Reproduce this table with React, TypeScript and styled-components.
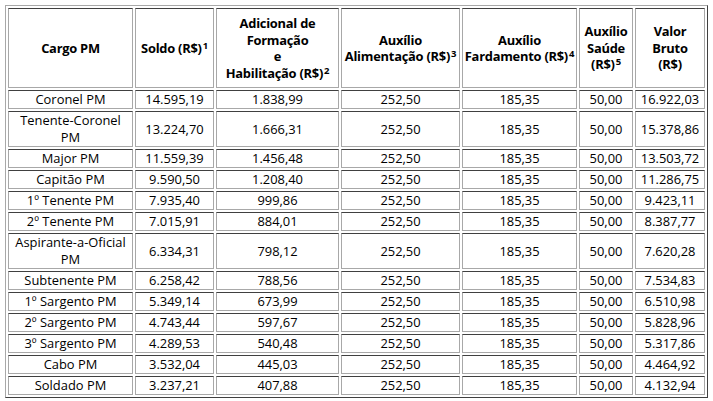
import React from "react";
import styled, { createGlobalStyle } from "styled-components";

const GlobalStyle = createGlobalStyle`
  html, body {
    margin: 0;
    padding: 0;
    background: #ffffff;
  }
  body {
    padding: 5px 0 0 5px;
    font-family: "Open Sans", "Liberation Sans", sans-serif;
    color: #000000;
  }
`;

const Sheet = styled.table`
  width: 701px;
  table-layout: fixed;
  border-collapse: separate;
  border-spacing: 2px;
  border: 1px solid;
  border-color: #a8a8a8 #404040 #404040 #a8a8a8;
  background: #ffffff;
  font-size: 12.9px;
`;

const Col = styled.col<{ $w: number }>`
  width: ${({ $w }) => $w}px;
`;

const HeadCell = styled.th`
  height: 78px;
  padding: 0;
  border: 1px solid;
  border-color: #404040 #a8a8a8 #a8a8a8 #a8a8a8;
  font-weight: 700;
  line-height: 16.5px;
  text-align: center;
  vertical-align: middle;
  white-space: nowrap;
  letter-spacing: -0.25px;
`;

const Cell = styled.td<{ $tall?: boolean }>`
  padding: 0 1px;
  border: 1px solid;
  border-color: #404040 #a8a8a8 #a8a8a8 #a8a8a8;
  line-height: 17px;
  height: ${({ $tall }) => ($tall ? 34 : 17)}px;
  text-align: center;
  vertical-align: middle;
`;

const Sup = styled.sup`
  font-size: 9.5px;
  line-height: 1;
  vertical-align: 4px;
  margin-left: 1px;
`;

type Row = {
  cargo: string;
  soldo: string;
  adicional: string;
  total: string;
  tall?: boolean;
};

const rows: Row[] = [
  { cargo: "Coronel PM", soldo: "14.595,19", adicional: "1.838,99", total: "16.922,03" },
  { cargo: "Tenente-Coronel PM", soldo: "13.224,70", adicional: "1.666,31", total: "15.378,86", tall: true },
  { cargo: "Major PM", soldo: "11.559,39", adicional: "1.456,48", total: "13.503,72" },
  { cargo: "Capitão PM", soldo: "9.590,50", adicional: "1.208,40", total: "11.286,75" },
  { cargo: "1º Tenente PM", soldo: "7.935,40", adicional: "999,86", total: "9.423,11" },
  { cargo: "2º Tenente PM", soldo: "7.015,91", adicional: "884,01", total: "8.387,77" },
  { cargo: "Aspirante-a-Oficial PM", soldo: "6.334,31", adicional: "798,12", total: "7.620,28", tall: true },
  { cargo: "Subtenente PM", soldo: "6.258,42", adicional: "788,56", total: "7.534,83" },
  { cargo: "1º Sargento PM", soldo: "5.349,14", adicional: "673,99", total: "6.510,98" },
  { cargo: "2º Sargento PM", soldo: "4.743,44", adicional: "597,67", total: "5.828,96" },
  { cargo: "3º Sargento PM", soldo: "4.289,53", adicional: "540,48", total: "5.317,86" },
  { cargo: "Cabo PM", soldo: "3.532,04", adicional: "445,03", total: "4.464,92" },
  { cargo: "Soldado PM", soldo: "3.237,21", adicional: "407,88", total: "4.132,94" },
];

const widths = [125, 79, 123, 119, 115, 54, 70];

export default function App() {
  return (
    <>
      <GlobalStyle />
      <Sheet>
        <colgroup>
          {widths.map((w, i) => (
            <Col key={i} $w={w} />
          ))}
        </colgroup>
        <thead>
          <tr>
            <HeadCell>Cargo PM</HeadCell>
            <HeadCell>
              Soldo (R$)<Sup>1</Sup>
            </HeadCell>
            <HeadCell>
              Adicional de
              <br />
              Formação
              <br />e<br />
              Habilitação (R$)<Sup>2</Sup>
            </HeadCell>
            <HeadCell>
              Auxílio
              <br />
              Alimentação (R$)<Sup>3</Sup>
            </HeadCell>
            <HeadCell>
              Auxílio
              <br />
              Fardamento (R$)<Sup>4</Sup>
            </HeadCell>
            <HeadCell>
              Auxílio
              <br />
              Saúde
              <br />
              (R$)<Sup>5</Sup>
            </HeadCell>
            <HeadCell>
              Valor
              <br />
              Bruto
              <br />
              (R$)
            </HeadCell>
          </tr>
        </thead>
        <tbody>
          {rows.map((r) => (
            <tr key={r.cargo}>
              <Cell $tall={r.tall}>{r.cargo}</Cell>
              <Cell>{r.soldo}</Cell>
              <Cell>{r.adicional}</Cell>
              <Cell>252,50</Cell>
              <Cell>185,35</Cell>
              <Cell>50,00</Cell>
              <Cell>{r.total}</Cell>
            </tr>
          ))}
        </tbody>
      </Sheet>
    </>
  );
}
